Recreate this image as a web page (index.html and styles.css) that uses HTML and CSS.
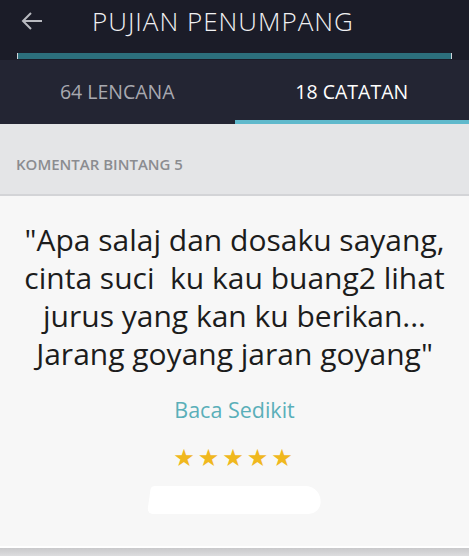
FILE: index.html
```html
<!DOCTYPE html>
<html lang="id">
<head>
    <meta charset="UTF-8">
    <meta name="viewport" content="width=device-width, initial-scale=1.0">
    <title>Pujian Penumpang</title>
    <link rel="stylesheet" href="styles.css">
</head>
<body>
    <div class="topbar">
        <div class="title-row">
            <svg class="back" width="24" height="20" viewBox="0 0 24 20">
                <path d="M22 10H3M11 2L3 10l8 8" fill="none" stroke="#b9bac0" stroke-width="2"/>
            </svg>
            <h1>PUJIAN PENUMPANG</h1>
        </div>
        <div class="progress"></div>
    </div>

    <div class="tabs">
        <div class="tab">64 LENCANA</div>
        <div class="tab active">18 CATATAN</div>
    </div>

    <div class="section-head">KOMENTAR BINTANG 5</div>

    <div class="card">
        <p class="quote">"Apa salaj dan dosaku sayang, cinta suci&nbsp; ku kau buang2 lihat jurus yang kan ku berikan... Jarang goyang jaran goyang"</p>
        <div class="more">Baca Sedikit</div>
        <div class="stars">★★★★★</div>
        <div class="smudge"></div>
    </div>
    <div class="bottom"></div>
</body>
</html>
```

FILE: styles.css
```css
body, html {
    margin: 0;
    padding: 0;
    background-color: #d9d9db;
    font-family: 'Open Sans', 'Noto Sans', sans-serif;
}

.topbar {
    background-color: #1b1c28;
    height: 60px;
    padding: 0 17px;
    box-sizing: border-box;
}

.title-row {
    display: flex;
    align-items: center;
    height: 53px;
    padding-bottom: 12px;
    box-sizing: border-box;
}

.back {
    margin-left: 3px;
}

.title-row h1 {
    margin: 0 0 0 48px;
    font-weight: 300;
    font-size: 26px;
    letter-spacing: 1px;
    color: #f1f1f3;
}

.progress {
    height: 6px;
    background-color: #2c6f7c;
    border-left: 1px solid #cfd3d8;
    border-right: 1px solid #cfd3d8;
}

.tabs {
    display: flex;
    height: 64px;
    background-color: #232533;
}

.tab {
    flex: 1;
    display: flex;
    align-items: center;
    justify-content: center;
    font-size: 19.5px;
    color: #a8a9b0;
    border-bottom: 4px solid transparent;
    padding-top: 2px;
    box-sizing: border-box;
}

.tab.active {
    color: #ffffff;
    border-bottom-color: #5fb9cc;
}

.section-head {
    height: 72px;
    background-color: #e4e5e7;
    border-bottom: 2px solid #d3d4d7;
    padding: 30px 16px 0;
    box-sizing: border-box;
    font-size: 15px;
    font-weight: 600;
    color: #8b8c90;
}

.card {
    background-color: #f7f7f7;
    height: 352px;
    padding-top: 25px;
    box-sizing: border-box;
    text-align: center;
    border-bottom: 2px solid #ffffff;
}

.quote {
    margin: 0 8px;
    font-size: 30px;
    line-height: 38px;
    color: #1c1c1c;
}

.more {
    margin-top: 22px;
    font-size: 21.5px;
    color: #5aafb9;
}

.stars {
    margin-top: 20px;
    font-size: 24px;
    letter-spacing: 3px;
    color: #f0b81e;
    font-family: 'DejaVu Sans', sans-serif;
}

.smudge {
    width: 172px;
    height: 28px;
    margin: 14px auto 0;
    background-color: #ffffff;
    border-radius: 4px 18px 10px 6px;
    transform: skewX(-8deg);
}

.bottom {
    height: 8px;
    background: linear-gradient(#c9c9cb, #dcdcde);
}
```
